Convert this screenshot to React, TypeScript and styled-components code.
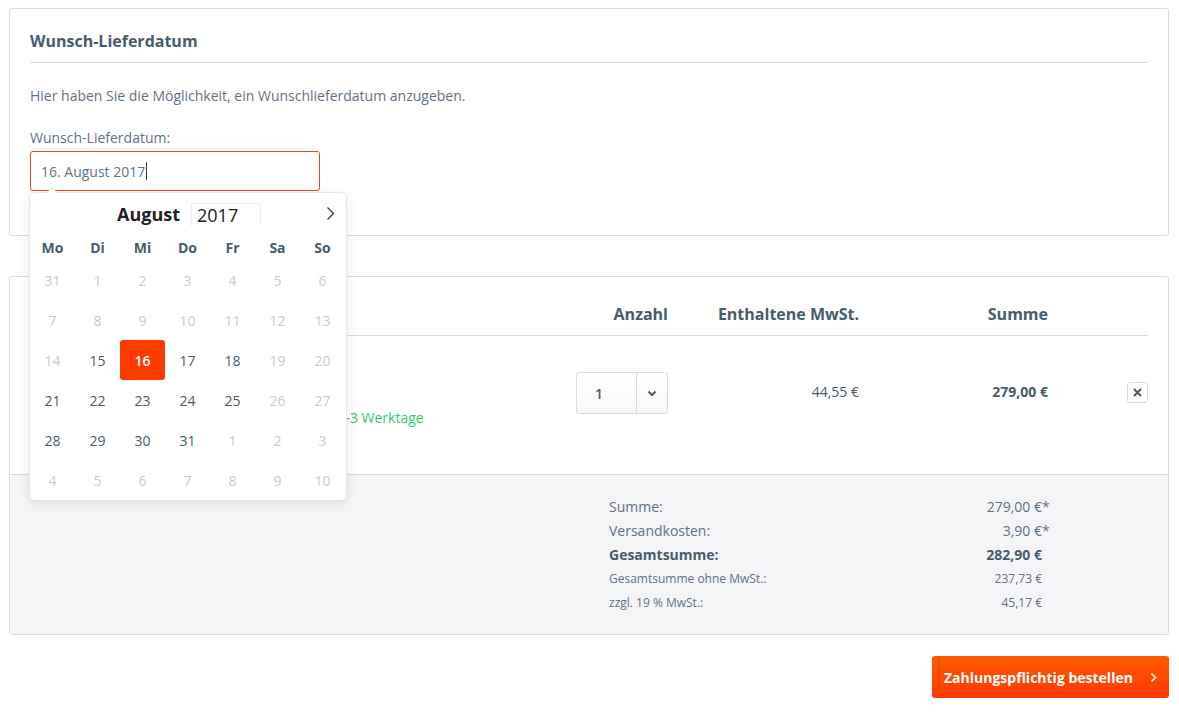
import React from "react";
import styled, { createGlobalStyle } from "styled-components";

const GlobalStyle = createGlobalStyle`
  html, body { margin: 0; padding: 0; background: #ffffff; }
  body {
    font-family: "Open Sans", "Noto Sans", "Liberation Sans", sans-serif;
    color: #5f7285;
    font-size: 14px;
    -webkit-font-smoothing: antialiased;
  }
  * { box-sizing: border-box; }
`;

const Page = styled.div`
  width: 1179px;
  padding: 8px 10px 0 9px;
`;

const Panel = styled.section`
  border: 1px solid #dadae5;
  border-radius: 3px;
  background: #ffffff;
`;

const DatePanel = styled(Panel)`
  padding: 20px 20px 44px;
`;

const PanelTitle = styled.h2`
  margin: 0;
  font-size: 16px;
  line-height: 24px;
  font-weight: 700;
  color: #475c6a;
  padding-bottom: 9px;
  border-bottom: 1px solid #dadae5;
`;

const Text = styled.p`
  margin: 23px 0 0;
  font-size: 14px;
  line-height: 20px;
`;

const Label = styled.div`
  margin-top: 22px;
  font-size: 14px;
  line-height: 20px;
`;

const FieldWrap = styled.div`
  position: relative;
  margin-top: 3px;
  width: 290px;
`;

const DateInput = styled.div`
  height: 40px;
  border: 1px solid #f0461a;
  border-radius: 3px;
  padding: 0 10px;
  display: flex;
  align-items: center;
  font-size: 14px;
  color: #5f7285;
`;

const Caret = styled.span`
  display: inline-block;
  width: 1px;
  height: 18px;
  background: #333;
  margin-left: 1px;
`;

const Calendar = styled.div`
  position: absolute;
  top: 42px;
  left: 0;
  width: 316px;
  background: #fff;
  border-radius: 5px;
  z-index: 10;
  box-shadow: 1px 0 0 #e6e6e6, -1px 0 0 #e6e6e6, 0 1px 0 #e6e6e6,
    0 -1px 0 #e6e6e6, 0 3px 13px rgba(0, 0, 0, 0.1);
  &::before,
  &::after {
    content: "";
    position: absolute;
    left: 17px;
    width: 0;
    height: 0;
    border: solid transparent;
  }
  &::before {
    bottom: 100%;
    border-width: 6px;
    margin-left: -1px;
    border-bottom-color: #e6e6e6;
  }
  &::after {
    bottom: 100%;
    border-width: 5px;
    border-bottom-color: #fff;
  }
`;

const CalHeader = styled.div`
  height: 41px;
  display: grid;
  grid-template-columns: 34px 1fr 34px;
  align-items: center;
`;

const MonthGroup = styled.div`
  display: flex;
  justify-content: center;
  align-items: center;
  gap: 11px;
  padding-left: 2px;
`;

const MonthName = styled.span`
  font-size: 18px;
  font-weight: 700;
  color: #222;
  line-height: 24px;
`;

const YearBox = styled.span`
  width: 70px;
  height: 23px;
  margin-top: 1px;
  padding-left: 5px;
  border: 1px solid #eeeeee;
  border-bottom: none;
  font-size: 18px;
  line-height: 22px;
  color: #222;
`;

const NavArrow = styled.span`
  display: flex;
  align-items: center;
  justify-content: center;
  padding-left: 2px;
`;

const WeekRow = styled.div`
  display: grid;
  grid-template-columns: repeat(7, 45px);
  height: 26px;
  align-items: center;
`;

const WeekDay = styled.span`
  text-align: center;
  font-size: 14px;
  font-weight: 700;
  color: #475c6a;
`;

const DayGrid = styled.div`
  display: grid;
  grid-template-columns: repeat(7, 45px);
  grid-auto-rows: 40px;
`;

type DayKind = "off" | "on" | "selected";

const Day = styled.span<{ $kind: DayKind }>`
  display: flex;
  align-items: center;
  justify-content: center;
  font-size: 14px;
  border-radius: 3px;
  font-weight: ${(p) => (p.$kind === "selected" ? 600 : p.$kind === "on" ? 500 : 400)};
  color: ${(p) =>
    p.$kind === "selected" ? "#fff" : p.$kind === "on" ? "#475c6a" : "#cdcacb"};
  background: ${(p) => (p.$kind === "selected" ? "#ff3a00" : "transparent")};
`;

const CartPanel = styled(Panel)`
  margin-top: 40px;
  overflow: hidden;
`;

const Cols = `
  display: grid;
  grid-template-columns: 546px 92px 191px 189px 100px;
`;

const HeadRow = styled.div`
  ${Cols}
  margin: 0 20px;
  padding: 25px 0 9px;
  border-bottom: 1px solid #dadae5;
`;

const HeadCell = styled.div<{ $align?: string }>`
  font-size: 16px;
  font-weight: 700;
  line-height: 24px;
  color: #475c6a;
  text-align: ${(p) => p.$align || "left"};
`;

const ItemRow = styled.div`
  ${Cols}
  margin: 0 20px;
  height: 138px;
  padding-top: 36px;
  align-items: start;
`;

const ProductCell = styled.div`
  display: grid;
  grid-template-columns: 200px 1fr;
  gap: 22px;
`;

const ProductImage = styled.div`
  width: 90px;
  height: 90px;
  border: 1px solid #eee;
`;

const ProductInfo = styled.div`
  display: flex;
  flex-direction: column;
  padding-top: 20px;
`;

const Delivery = styled.div`
  margin-top: 16px;
  font-size: 14px;
  line-height: 20px;
  color: #2ecc71;
`;

const QtySelect = styled.div`
  width: 92px;
  height: 42px;
  border: 1px solid #dadae5;
  border-radius: 3px;
  background: linear-gradient(#ffffff, #f8f8fa);
  display: grid;
  grid-template-columns: 60px 1fr;
`;

const QtyValue = styled.span`
  display: flex;
  align-items: center;
  padding-left: 18px;
  font-size: 14px;
  font-weight: 600;
  color: #475c6a;
  border-right: 1px solid #dadae5;
`;

const QtyToggle = styled.span`
  display: flex;
  align-items: center;
  justify-content: center;
`;

const ValueCell = styled.div<{ $bold?: boolean }>`
  text-align: right;
  font-size: 14px;
  line-height: 40px;
  font-weight: ${(p) => (p.$bold ? 700 : 400)};
  color: #475c6a;
`;

const RemoveCell = styled.div`
  display: flex;
  justify-content: flex-end;
  padding-top: 10px;
`;

const RemoveButton = styled.span`
  width: 21px;
  height: 21px;
  border: 1px solid #dadae5;
  border-radius: 3px;
  background: #fff;
  display: flex;
  align-items: center;
  justify-content: center;
`;

const Summary = styled.div`
  border-top: 1px solid #dadae5;
  background: #f5f5f8;
  padding: 20px 120px 19px 0;
  display: flex;
  justify-content: flex-end;
`;

const SummaryList = styled.div`
  width: 439px;
  display: grid;
  grid-template-columns: 1fr auto;
`;

const SumLabel = styled.div<{ $small?: boolean; $bold?: boolean }>`
  font-size: ${(p) => (p.$small ? "12px" : "14px")};
  line-height: 24px;
  font-weight: ${(p) => (p.$bold ? 700 : 400)};
  color: ${(p) => (p.$bold ? "#475c6a" : "#5f7285")};
`;

const SumValue = styled(SumLabel)`
  text-align: right;
  display: flex;
  justify-content: flex-end;
`;

const Star = styled.span`
  display: inline-block;
  width: 6px;
  text-align: left;
`;

const Actions = styled.div`
  margin-top: 21px;
  display: flex;
  justify-content: flex-end;
`;

const OrderButton = styled.button`
  width: 237px;
  height: 42px;
  border: none;
  border-radius: 3px;
  background: linear-gradient(#ff5a00, #ff3a00);
  color: #fff;
  font-family: "Open Sans", "Noto Sans", sans-serif;
  font-size: 14px;
  font-weight: 700;
  padding: 0 12px;
  display: flex;
  align-items: center;
  justify-content: space-between;
  cursor: pointer;
`;

const weekDays = ["Mo", "Di", "Mi", "Do", "Fr", "Sa", "So"];

const rows: number[][] = [
  [31, 1, 2, 3, 4, 5, 6],
  [7, 8, 9, 10, 11, 12, 13],
  [14, 15, 16, 17, 18, 19, 20],
  [21, 22, 23, 24, 25, 26, 27],
  [28, 29, 30, 31, 1, 2, 3],
  [4, 5, 6, 7, 8, 9, 10],
];

const enabled = new Set([15, 17, 18, 21, 22, 23, 24, 25, 28, 29, 30, 31]);

function kindOf(row: number, col: number, n: number): DayKind {
  if (row === 2 && n === 16) return "selected";
  if (row >= 2 && row <= 4 && enabled.has(n) && !(row === 4 && col >= 4)) return "on";
  return "off";
}

export default function App() {
  return (
    <>
      <GlobalStyle />
      <Page>
        <DatePanel>
          <PanelTitle>Wunsch-Lieferdatum</PanelTitle>
          <Text>Hier haben Sie die Möglichkeit, ein Wunschlieferdatum anzugeben.</Text>
          <Label>Wunsch-Lieferdatum:</Label>
          <FieldWrap>
            <DateInput>
              16. August 2017
              <Caret />
            </DateInput>
            <Calendar>
              <CalHeader>
                <span />
                <MonthGroup>
                  <MonthName>August</MonthName>
                  <YearBox>2017</YearBox>
                </MonthGroup>
                <NavArrow>
                  <svg width="9" height="15" viewBox="0 0 9 15">
                    <polyline points="1.5,1.5 7.5,7.5 1.5,13.5" fill="none" stroke="#3a3a3a" strokeWidth="1.3" />
                  </svg>
                </NavArrow>
              </CalHeader>
              <WeekRow>
                {weekDays.map((d) => (
                  <WeekDay key={d}>{d}</WeekDay>
                ))}
              </WeekRow>
              <DayGrid>
                {rows.map((r, ri) =>
                  r.map((n, ci) => (
                    <Day key={`${ri}-${ci}`} $kind={kindOf(ri, ci, n)}>
                      {n}
                    </Day>
                  ))
                )}
              </DayGrid>
            </Calendar>
          </FieldWrap>
        </DatePanel>

        <CartPanel>
          <HeadRow>
            <HeadCell />
            <HeadCell $align="right">Anzahl</HeadCell>
            <HeadCell $align="right">Enthaltene MwSt.</HeadCell>
            <HeadCell $align="right">Summe</HeadCell>
            <HeadCell />
          </HeadRow>
          <ItemRow>
            <ProductCell>
              <ProductImage />
              <ProductInfo>
                <Delivery>Lieferzeit ca. 1-3 Werktage</Delivery>
              </ProductInfo>
            </ProductCell>
            <QtySelect>
              <QtyValue>1</QtyValue>
              <QtyToggle>
                <svg width="10" height="7" viewBox="0 0 10 7">
                  <polyline points="1.5,1.5 5,5 8.5,1.5" fill="none" stroke="#475c6a" strokeWidth="2" />
                </svg>
              </QtyToggle>
            </QtySelect>
            <ValueCell>44,55 €</ValueCell>
            <ValueCell $bold>279,00 €</ValueCell>
            <RemoveCell>
              <RemoveButton>
                <svg width="9" height="9" viewBox="0 0 9 9">
                  <path d="M1.5 1.5 L7.5 7.5 M7.5 1.5 L1.5 7.5" stroke="#475c6a" strokeWidth="2" strokeLinecap="round" />
                </svg>
              </RemoveButton>
            </RemoveCell>
          </ItemRow>
          <Summary>
            <SummaryList>
              <SumLabel>Summe:</SumLabel>
              <SumValue>279,00 €<Star>*</Star></SumValue>
              <SumLabel>Versandkosten:</SumLabel>
              <SumValue>3,90 €<Star>*</Star></SumValue>
              <SumLabel $bold>Gesamtsumme:</SumLabel>
              <SumValue $bold>282,90 €<Star /></SumValue>
              <SumLabel $small>Gesamtsumme ohne MwSt.:</SumLabel>
              <SumValue $small>237,73 €<Star /></SumValue>
              <SumLabel $small>zzgl. 19 % MwSt.:</SumLabel>
              <SumValue $small>45,17 €<Star /></SumValue>
            </SummaryList>
          </Summary>
        </CartPanel>

        <Actions>
          <OrderButton>
            <span>Zahlungspflichtig bestellen</span>
            <svg width="7" height="11" viewBox="0 0 7 11">
              <polyline points="1.5,1.5 5.5,5.5 1.5,9.5" fill="none" stroke="#fff" strokeWidth="1.6" />
            </svg>
          </OrderButton>
        </Actions>
      </Page>
    </>
  );
}
